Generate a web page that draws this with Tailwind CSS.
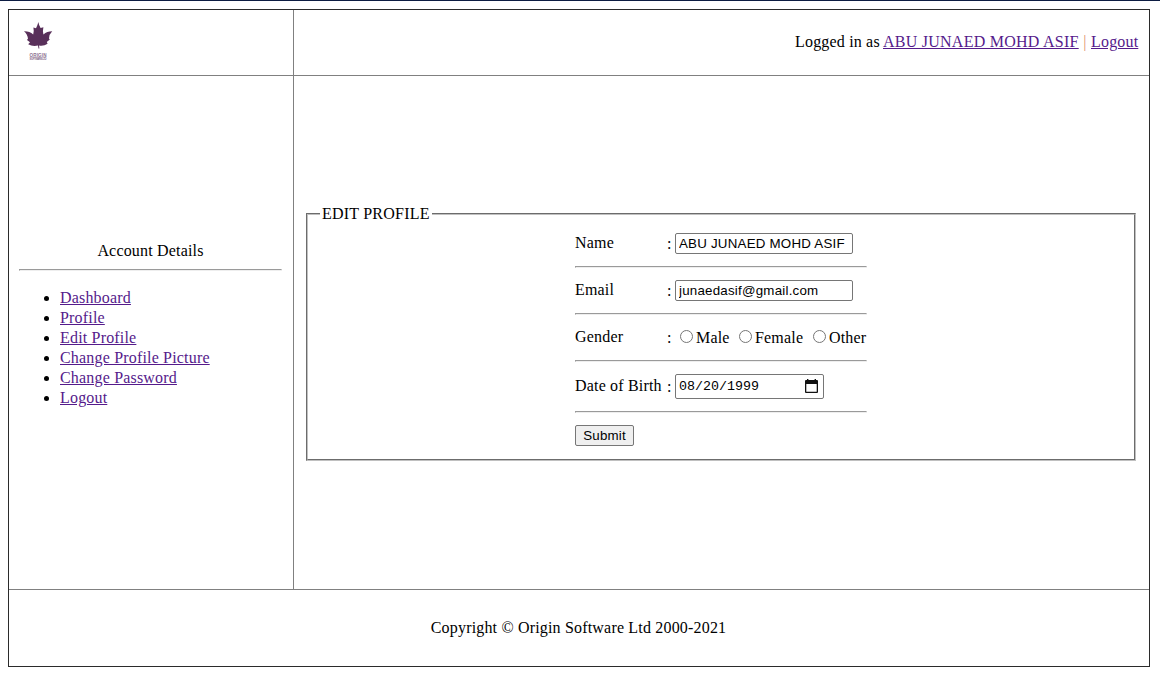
<!DOCTYPE html>
<html lang="en">
<head>
<meta charset="utf-8">
<title>Edit Profile</title>
<script src="https://cdn.jsdelivr.net/npm/@tailwindcss/browser@4"></script>
</head>
<body class="h-[678px] overflow-hidden border-t border-[#0c1c42] bg-white px-2 pt-2 font-['Liberation_Serif',serif] text-base leading-5 tracking-[0.18px] text-black">
<div class="flex h-[658px] w-[1142px] flex-col border border-[#2b2b2b]">
  <header class="flex h-[66px] border-b border-[#808080]">
    <div class="w-[285px] border-r border-[#808080] pt-[11px] pl-[14px]">
      <svg class="h-[40px] w-[30px]" viewBox="0 0 30 40">
        <path fill="#59305a" d="M15.3 1Q16 4.5 17.6 7L20.4 6.2Q19.4 10 20.4 13.4Q24 10.2 29.2 10.2Q26.2 13 26 17.6L26.8 18.6L23.8 21L24.6 22.8Q20.5 25.6 16 24.6L16.4 27.6H15.5L15 24.6Q9.5 25.8 5.2 23.3L7 21.3L4 19L5 17.6Q4.4 12.8 1 10.2Q6.5 10 10.2 13.4Q11.2 10 10.4 6.4L13 7.3Q14.6 4.5 15.3 1Z"/>
        <text x="6.5" y="35.6" font-family="Liberation Sans, sans-serif" font-weight="700" font-size="4.6" letter-spacing="0" textLength="17" fill="#8d7190">ORIGIN</text>
        <text x="6.5" y="38.6" font-family="Liberation Sans, sans-serif" font-weight="700" font-size="2.8" letter-spacing="0" textLength="17" fill="#8d7190">SOFTWARE LTD</text>
      </svg>
    </div>
    <div class="flex flex-1 items-center justify-end pr-[10px] pb-[2px] whitespace-pre"><span class="w-[88px]">Logged in as</span><a class="w-[196px] tracking-[0.25px] text-[#551a8b] underline">ABU JUNAED MOHD ASIF</a><span class="w-3 text-center text-[#e0906c]">|</span><a class="w-[48px] text-[#551a8b] underline">Logout</a></div>
  </header>
  <main class="flex h-[514px] border-b border-[#808080]">
    <nav class="w-[285px] border-r border-[#808080] pt-[165px] pr-[11px] pl-[10px]">
      <p class="text-center">Account Details</p>
      <hr class="mt-2 h-[2px] border border-t-[#9a9a9a] border-r-[#eee] border-b-[#eee] border-l-[#9a9a9a]">
      <ul class="mt-[17px] list-disc pl-[41px]">
        <li><a class="text-[#551a8b] underline">Dashboard</a></li>
        <li><a class="text-[#551a8b] underline">Profile</a></li>
        <li><a class="text-[#551a8b] underline">Edit Profile</a></li>
        <li><a class="text-[#551a8b] underline">Change Profile Picture</a></li>
        <li><a class="text-[#551a8b] underline">Change Password</a></li>
        <li><a class="text-[#551a8b] underline">Logout</a></li>
      </ul>
    </nav>
    <section class="flex-1 pt-[128px] pr-[13px] pl-[12px]">
      <fieldset class="h-[257px] border-2 border-[#c0c0c0] [border-style:groove] px-3">
        <legend class="px-[2px] tracking-[0.22px]">EDIT PROFILE</legend>
        <form class="mx-auto mt-[9px] flex w-[292px] flex-col gap-3">
          <div class="flex h-[21px] items-center"><span class="w-[92px] pb-px">Name</span><span class="w-2">:</span><input class="h-[21px] w-[178px] rounded-[2px] border border-[#767676] px-[3px] font-['Liberation_Sans',sans-serif] text-[13.33px] tracking-[0.22px]" value="ABU JUNAED MOHD ASIF"></div>
          <hr class="h-[2px] border border-t-[#9a9a9a] border-r-[#eee] border-b-[#eee] border-l-[#9a9a9a]">
          <div class="flex h-[21px] items-center"><span class="w-[92px] pb-px">Email</span><span class="w-2">:</span><input class="h-[21px] w-[178px] rounded-[2px] border border-[#767676] px-[3px] font-['Liberation_Sans',sans-serif] text-[13.33px] tracking-[0.22px]" value="junaedasif@gmail.com"></div>
          <hr class="h-[2px] border border-t-[#9a9a9a] border-r-[#eee] border-b-[#eee] border-l-[#9a9a9a]">
          <div class="flex h-[21px] items-center whitespace-nowrap"><span class="w-[92px] pb-px">Gender</span><span class="w-[13px] pt-px">:</span>
            <label class="flex w-[59px] gap-[3px] pt-px"><input type="radio" name="g" class="mt-[2px] size-[13px]">Male</label>
            <label class="flex w-[74px] gap-[3px] pt-px"><input type="radio" name="g" class="mt-[2px] size-[13px]">Female</label>
            <label class="flex gap-[3px] pt-px"><input type="radio" name="g" class="mt-[2px] size-[13px]">Other</label></div>
          <hr class="h-[2px] border border-t-[#9a9a9a] border-r-[#eee] border-b-[#eee] border-l-[#9a9a9a]">
          <div class="flex h-[25px] items-center"><span class="w-[92px] pb-px whitespace-nowrap">Date of Birth</span><span class="w-2">:</span>
            <div class="flex h-[25px] w-[149px] items-center justify-between rounded-[2px] border border-[#767676] pr-[5px] pl-[3px] font-['Liberation_Mono',monospace] text-[13.33px] tracking-normal"><span>08/20/1999</span>
              <svg class="h-[15px] w-[13px]" viewBox="0 0 13 15"><path fill="#111" fill-rule="evenodd" d="M2 0H3.4V1H9.6V0H11V1H12Q13 1 13 2V13Q13 14 12 14H1Q0 14 0 13V2Q0 1 1 1H2ZM1.3 5V12.7H11.7V5Z"/></svg></div></div>
          <hr class="h-[2px] border border-t-[#9a9a9a] border-r-[#eee] border-b-[#eee] border-l-[#9a9a9a]">
          <button type="button" class="h-[21px] w-[59px] rounded-[2px] border border-[#767676] bg-[#efefef] font-['Liberation_Sans',sans-serif] text-[13.33px] leading-[19px]">Submit</button>
        </form>
      </fieldset>
    </section>
  </main>
  <footer class="flex flex-1 items-center justify-center pr-px">Copyright © Origin Software Ltd 2000-2021</footer>
</div>
</body>
</html>
